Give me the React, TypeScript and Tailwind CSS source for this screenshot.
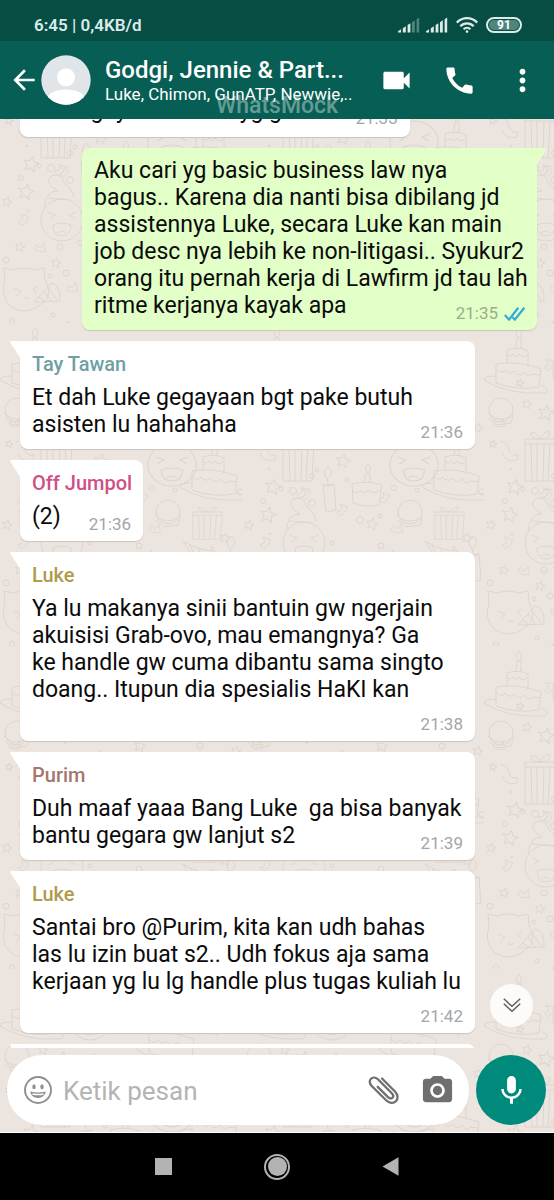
import { MdArrowBack, MdCall, MdCameraAlt, MdMic, MdMoreVert, MdVideocam } from "react-icons/md"

type Message = {
  id: number
  author?: string
  color?: string
  text: string
  time: string
  mine?: boolean
}

const messages: Message[] = [
  { id: 1, text: "Emangnya mau cari yg gmna", time: "21:33" },
  {
    id: 2,
    text: "Aku cari yg basic business law nya\nbagus.. Karena dia nanti bisa dibilang jd assistennya Luke, secara Luke kan main job desc nya lebih ke non-litigasi.. Syukur2 orang itu pernah kerja di Lawfirm jd tau lah ritme kerjanya kayak apa",
    time: "21:35",
    mine: true,
  },
  {
    id: 3,
    author: "Tay Tawan",
    color: "text-[#6f9fa4]",
    text: "Et dah Luke gegayaan bgt pake butuh asisten lu hahahaha",
    time: "21:36",
  },
  { id: 4, author: "Off Jumpol", color: "text-[#cf4f86]", text: "(2)", time: "21:36" },
  {
    id: 5,
    author: "Luke",
    color: "text-[#b09a4c]",
    text: "Ya lu makanya sinii bantuin gw ngerjain akuisisi Grab-ovo, mau emangnya? Ga\nke handle gw cuma dibantu sama singto doang.. Itupun dia spesialis HaKI kan",
    time: "21:38",
  },
  {
    id: 6,
    author: "Purim",
    color: "text-[#a5766f]",
    text: "Duh maaf yaaa Bang Luke  ga bisa banyak bantu gegara gw lanjut s2",
    time: "21:39",
  },
  {
    id: 7,
    author: "Luke",
    color: "text-[#b09a4c]",
    text: "Santai bro @Purim, kita kan udh bahas\nlas lu izin buat s2.. Udh fokus aja sama kerjaan yg lu lg handle plus tugas kuliah lu",
    time: "21:42",
  },
]

function Signal({ level }: { level: number }) {
  return (
    <svg viewBox="0 0 22 16" className="h-4 w-[22px] fill-[#dcebe9]" aria-hidden="true">
      <path d="M0 15.5v-1.2l3-2v3.2z" />
      <path d="M4.8 15.5v-4.300l3-2v6.300z" />
      <path d="M9.600 15.500v-7.400l2.800-1.900v9.300z" />
      <path d="M14 15.500V5.200l2.800-1.900v12.200z" opacity={level > 3 ? 1 : 0.35} />
      <path d="M18.600 15.500V2.200L21.200.4v15.100z" opacity={level > 4 ? 1 : 0.35} />
    </svg>
  )
}

function StatusBar() {
  return (
    <div className="flex h-[41px] shrink-0 items-end justify-between bg-[#064d44] pr-8 pb-1 pl-[34px] text-[#dcebe9]">
      <span className="text-[17px] leading-6 font-semibold">6:45 | 0,4KB/d</span>
      <div className="flex items-center gap-1.5 pb-1">
        <Signal level={3} />
        <Signal level={5} />
        <svg viewBox="0 0 22 16" className="ml-0.5 h-4 w-[22px]" fill="none" stroke="#dcebe9" strokeWidth="2.3" aria-hidden="true">
          <path d="M.8 5.600C6.600-.4 15.400-.4 21.200 5.600" />
          <path d="M4.300 9.200c3.800-3.900 9.600-3.900 13.400 0" />
          <path d="M7.600 12.300c2-2 4.800-2 6.800 0" />
          <circle cx="11" cy="14.600" r="1.300" fill="#dcebe9" stroke="none" />
        </svg>
        <div className="ml-0.5 flex h-4 w-9 rounded-full border-2 border-[#dcebe9] p-px">
          <span className="flex-1 rounded-full bg-[#4f857c] text-center text-[12px] leading-[10px] font-bold text-white">91</span>
        </div>
      </div>
    </div>
  )
}

function ChatHeader() {
  return (
    <header className="relative z-10 flex h-[78px] shrink-0 items-center bg-[#075e54] pr-3.5 pl-2 text-white">
      <button type="button" aria-label="Kembali" className="w-8">
        <MdArrowBack className="size-8" />
      </button>
      <svg viewBox="0 0 50 50" className="ml-px size-[50px] shrink-0" aria-hidden="true">
        <clipPath id="avatar">
          <circle cx="25" cy="25" r="24.700" />
        </clipPath>
        <g clipPath="url(#avatar)">
          <path fill="#dfe5e8" d="M0 0h50v50H0z" />
          <circle cx="25" cy="22.300" r="9" fill="#fff" />
          <path fill="#fff" d="M6 46c0-8 9-11.500 19-11.500S44 38 44 46v6H6z" />
        </g>
      </svg>
      <div className="ml-3.5 min-w-0 flex-1">
        <h1 className="truncate text-[24px] leading-7 font-medium">Godgi, Jennie &amp; Part...</h1>
        <p className="text-[17px] leading-5 whitespace-nowrap">Luke, Chimon, GunATP, Newwie,..</p>
      </div>
      <div className="flex items-center gap-7">
        <button type="button" aria-label="Panggilan video">
          <MdVideocam className="size-[35px]" />
        </button>
        <button type="button" aria-label="Panggilan suara">
          <MdCall className="size-[35px]" />
        </button>
        <button type="button" aria-label="Menu lainnya">
          <MdMoreVert className="size-[35px]" />
        </button>
      </div>
      <span className="pointer-events-none absolute inset-x-0 bottom-0 text-center text-[23px] leading-[26px] font-medium text-white/40">
        WhatsMock
      </span>
    </header>
  )
}

const stars = [
  [31, 164, 8], [26, 192, 8], [7, 202, 5], [20, 247, 5], [56, 263, 5], [67, 329, 8], [9, 121, 4],
  [43, 81, 5], [62, 90, 8], [101, 138, 7], [130, 201, 6], [36, 60, 4], [150, 232, 5], [110, 30, 7],
  [190, 300, 7], [93, 90, 6], [140, 100, 6], [225, 215, 5], [214, 60, 7], [98, 285, 6], [236, 105, 5],
]

const dots = [
  [51, 168, 3.5], [21, 178, 2.5], [70, 153, 2.5], [39, 166, 2], [80, 243, 2.5], [60, 247, 3], [6, 260, 3],
  [50, 276, 2], [66, 273, 3], [12, 321, 2.5], [53, 315, 2], [70, 180, 3.5], [75, 147, 2], [118, 197, 3.5],
  [138, 193, 2], [139, 223, 3], [152, 165, 2.5], [175, 167, 2], [90, 220, 2], [105, 157, 2], [240, 169, 3],
  [28, 211, 1], [27, 146, 1], [212, 225, 1.5], [120, 60, 3], [160, 40, 2], [200, 100, 3], [130, 300, 2.500],
]

const streamers = [
  [64, 171, 0], [23, 220, 20], [40, 248, 80], [72, 288, 70], [100, 187, 20], [10, 330, 10], [155, 206, 80],
  [142, 175, 30], [15, 100, 80], [65, 42, 10], [100, 110, 30], [182, 262, 20], [140, 270, 70], [60, 170, 30],
]

// Party doodles, repeated as one tile over the chat background
function Wallpaper() {
  return (
    <svg className="absolute inset-0 size-full" aria-hidden="true">
      <defs>
        <path id="star" d="M0-1 .28-.35 1-.3.45.15.6.85 0 .47-.6.85-.45.15-1-.3-.28-.35z" vectorEffect="non-scaling-stroke" />
        <path id="streamer" d="M-5-6q5 3 4 7l-4 3q3 3 5 3 6-4 5-13z" />
        <g id="cake">
          <path d="M-10-21q11-4 21 1v16M-10-21v14M-10-17q3 4 6 0 3 5 6 0 4 5 8 1" />
          <path d="M-21-7Q0-11 24-2l-2 18Q0 20-21 12zM-21-2q5 6 9 1 4 6 9 1 5 7 10 1 5 7 8 2l8 1" />
          <path d="M-21 5q-12 0-12 4Q-10 24 26 22q10-2-2-8M-1-23l1-10h4v11M2-33q-6-4 0-10 5 5 0 10" />
        </g>
        <g id="gift">
          <path d="M-15-15h31l-2 37h-29zM-9-15l1 37M-3-15v37M4-15l-1 37M10-15l-2 37" />
          <path d="M-15-15v-5h31v5M0-20q-10 0-9-7 6 0 9 7 5-9 10-7 0 8-10 7" />
        </g>
        <g id="candle">
          <path d="M-6-12 5-13 7 13-3 15zM-6-12q4 3 11-1M-1-14l-1-4M-2-18q-6-6 1-13 8 7-1 13" />
        </g>
        <g id="macaron">
          <circle cx="0" cy="-1" r="12" />
          <path d="M-13 2q11 12 26 1M-12 7l8 7 14-2 2-7" />
        </g>
        <g id="laugh">
          <circle r="21" />
          <path d="M-14-8l7 3-6 4M14-8l-7 3 6 4M-9 5q9-4 18 0 0 11-9 11T-9 5zM-5 13q5-4 9 0" />
        </g>
        <pattern id="doodles" x="0" y="-119" width="242" height="323" patternUnits="userSpaceOnUse">
          <g fill="none" stroke="#ddd4cd" strokeWidth="1" strokeLinejoin="round">
            <use href="#cake" x="33" y="48" />
            <use href="#cake" x="213" y="155" />
            <use href="#macaron" x="17" y="88" />
            <use href="#macaron" x="168" y="190" />
            <use href="#gift" x="56" y="136" />
            <use href="#gift" transform="translate(207 202) scale(.95 .65)" />
            <use href="#gift" x="120" y="262" />
            <use href="#candle" x="87" y="174" />
            <use href="#candle" x="232" y="244" />
            <path d="M110 161q15-4 30 1l-3 20q-13 3-26-2zM110 167q4 5 8 0 4 5 8 0 5 5 13 0M123 159v-8h5v8M126 150q-5-4 0-9 5 5 0 9" />
            <use href="#laugh" x="62" y="220" />
            <path d="M44 208q2-18 14-17-14-8-7-15 10-4 14 8 8 6 9 14M48 198l22 2" />
            <use href="#laugh" transform="translate(172 142) scale(1.150 1)" />
            <use href="#laugh" x="90" y="50" />
            <path d="M5 280l-1-12 10 2q10-4 20 0l10-2 1 11q8 16-1 23Q26 318 10 306 0 296 5 280z" />
            <path d="M14 288l7 3-5 5M38 286l-5 3 4 4M24 297l3 2 3-2M34 302l17-19q10 2 9 18zM39 297l6 5M44 291l8 11M48 287l9 13" />
            <path d="M16 119q6-2 8 5 2 10 10 8l-1 5q-12 3-15-7" />
            <path d="M183 218q16 10 32 10l-14 18zM190 222l6 14M199 226l2 14" />
            <use href="#cake" x="170" y="72" />
            <path d="M150 280l22-18 8 24zM158 274l7 8" />
            {stars.map(([x, y, r]) => (
              <use key={`${x}-${y}`} href="#star" transform={`translate(${x} ${y}) rotate(12) scale(${r})`} />
            ))}
            {streamers.map(([x, y, a]) => (
              <use key={`${x}-${y}`} href="#streamer" transform={`translate(${x} ${y}) rotate(${a}) scale(.8)`} />
            ))}
            {dots.map(([x, y, r]) => (
              <circle key={`${x}-${y}`} cx={x} cy={y} r={r} />
            ))}
          </g>
        </pattern>
      </defs>
      <rect width="100%" height="100%" fill="url(#doodles)" />
    </svg>
  )
}

function Tail({ mine }: { mine?: boolean }) {
  return mine ? (
    <svg viewBox="0 0 11 17" className="absolute top-0 -right-2.5 h-[17px] w-[11px]" aria-hidden="true">
      <path fill="#e1ffc7" d="M0 0h9.500c1.300 0 1.600 1 .9 2L1 16.500H0z" />
    </svg>
  ) : (
    <svg viewBox="0 0 11 17" className="absolute top-0 -left-2.5 h-[17px] w-[11px]" aria-hidden="true">
      <path fill="#fff" d="M11 0H1.500C.2 0-.1 1 .6 2L10 16.500h1z" />
    </svg>
  )
}

function Bubble({ message }: { message: Message }) {
  const { author, color, text, time, mine } = message
  const padding = author ? "pt-[11px] pb-[7px]" : mine ? "pt-[9px] pb-[7px]" : "pt-[7px] pb-[9px]"
  return (
    <li
      className={`relative max-w-[88%] rounded-lg pr-2 pl-3 shadow-[0_1px_1px_#cdc5be] ${
        mine ? "self-end rounded-tr-none bg-[#e1ffc7]" : "self-start rounded-tl-none bg-white"
      } ${padding}`}
    >
      <Tail mine={mine} />
      {author && <h2 className={`mb-2 text-[20px] leading-6 font-medium ${color}`}>{author}</h2>}
      <div className="flow-root text-[23px] leading-[27px] whitespace-pre-wrap text-[#0b0b0b]">
        {text}
        <span
          className={`float-right mt-3 mr-1 ml-7 flex items-center gap-1.5 text-[17px] leading-[19px] ${
            mine ? "text-[#9bad8b]" : "text-[#a3a5a8]"
          }`}
        >
          {time}
          {mine && (
            <svg viewBox="0 0 21 14" className="h-3.5 w-[21px]" fill="none" stroke="#35a9dc" strokeWidth="2.200" aria-hidden="true">
              <path d="M.7 8l4.300 4.600L14.300.8M8.500 10.200l2.300 2.400L20.300.8" />
            </svg>
          )}
        </span>
      </div>
    </li>
  )
}

function Composer() {
  return (
    <form className="relative flex gap-[7px] border-b border-white p-[7px] pr-2" onSubmit={(e) => e.preventDefault()}>
      <div className="flex h-[70px] min-w-0 flex-1 items-center rounded-full bg-white pr-3.5 pl-4">
        <button type="button" aria-label="Emoji">
          <svg viewBox="0 0 30 30" className="size-[30px]" fill="none" stroke="#8d8f91" strokeWidth="1.900" aria-hidden="true">
            <circle cx="15" cy="15" r="13" />
            <g fill="#8d8f91" stroke="none">
              <ellipse cx="11" cy="11.800" rx="1.700" ry="2.500" />
              <ellipse cx="19" cy="11.800" rx="1.700" ry="2.500" />
              <path d="M7.300 16.500c5 1.200 10.400 1.200 15.400 0-.6 4-3.700 6.400-7.700 6.400s-7.100-2.400-7.700-6.400z" />
            </g>
            <path stroke="#fff" strokeWidth="1.500" d="M9.500 18.900c3.700.8 7.300.8 11 0" />
          </svg>
        </button>
        <input
          type="text"
          aria-label="Ketik pesan"
          placeholder="Ketik pesan"
          className="ml-2.5 h-10 min-w-0 flex-1 pt-0.5 text-[26px] outline-none placeholder:text-[#b4b4b4]"
        />
        <button type="button" aria-label="Lampirkan">
          <svg viewBox="0 0 32 30" className="h-[30px] w-8" fill="none" stroke="#6f6f6f" strokeWidth="2.300" strokeLinecap="round" aria-hidden="true">
            <path d="M14 3.500 27 16.500c3.100 3.100 3.300 7.300.9 9.700s-6.800 2.100-9.800-.9L3.700 11C1.300 8.600 1.200 5.600 3 3.800s4.800-1.700 7.200.7l13.600 13.700c1.700 1.700 1.800 3.500.7 4.600s-2.900.9-4.500-.7L9.700 11.900" />
          </svg>
        </button>
        <button type="button" aria-label="Kamera" className="ml-5">
          <MdCameraAlt className="size-[35px] text-[#6f6f6f]" />
        </button>
      </div>
      <button
        type="button"
        aria-label="Rekam suara"
        className="flex size-[70px] shrink-0 items-center justify-center rounded-full bg-[#008a7c] text-white"
      >
        <MdMic className="size-[35px]" />
      </button>
    </form>
  )
}

function NavBar() {
  return (
    <nav className="flex h-[67px] shrink-0 items-center justify-center gap-[92px] bg-black">
      <button type="button" aria-label="Aplikasi terbaru" className="size-[17px] bg-[#b3b3b3]" />
      <button
        type="button"
        aria-label="Beranda"
        className="flex size-[26px] items-center justify-center rounded-full border-2 border-[#b3b3b3]"
      >
        <span className="size-[19px] rounded-full bg-[#b3b3b3]" />
      </button>
      <button type="button" aria-label="Kembali ke sebelumnya">
        <svg viewBox="0 0 17 19" className="h-[19px] w-[17px] fill-[#b3b3b3]" aria-hidden="true">
          <path d="M16.500.3v18.400L.5 9.500z" />
        </svg>
      </button>
    </nav>
  )
}

export default function App() {
  return (
    <div className="flex h-screen flex-col overflow-hidden font-[Roboto,sans-serif]">
      <StatusBar />
      <ChatHeader />
      <main className="relative flex min-h-0 flex-1 flex-col bg-[#ece5df]">
        <Wallpaper />
        <div className="relative min-h-0 flex-1 overflow-hidden">
          <ul className="-mt-[29px] flex flex-col gap-[11px] pr-[17px] pl-5">
            {messages.map((message) => (
              <Bubble key={message.id} message={message} />
            ))}
            {/* next message, still below the fold */}
            <li className="relative h-24 w-[88%] rounded-lg rounded-tl-none bg-white">
              <Tail />
            </li>
          </ul>
          <button
            type="button"
            aria-label="Ke pesan terbaru"
            className="absolute right-[21px] bottom-[21px] flex size-[43px] items-center justify-center rounded-full bg-[#fcfbfa]"
          >
            <svg viewBox="0 0 18 15" className="h-[15px] w-[18px]" fill="none" stroke="#5f6062" strokeWidth="1.500" aria-hidden="true">
              <path d="M.8.800 9 8.300 17.200.800M.8 5.800 9 13.300l8.200-7.500" />
            </svg>
          </button>
        </div>
        <Composer />
      </main>
      <NavBar />
    </div>
  )
}
